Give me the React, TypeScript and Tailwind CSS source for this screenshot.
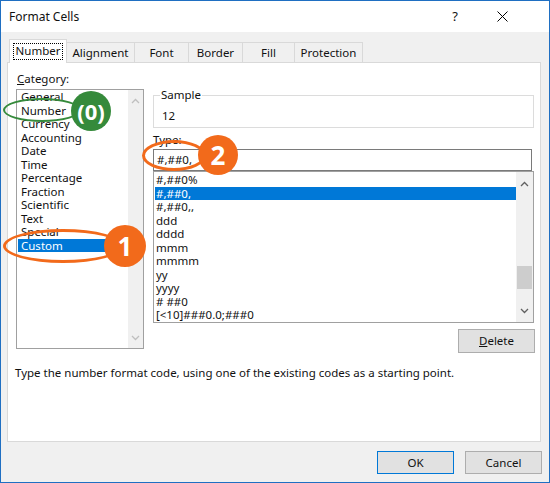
import React from 'react'

const categories = ['General', 'Number', 'Currency', 'Accounting', 'Date', 'Time', 'Percentage', 'Fraction', 'Scientific', 'Text', 'Special', 'Custom']
const types = ['#,##0%', '#,##0,', '#,##0,,', 'ddd', 'dddd', 'mmm', 'mmmm', 'yy', 'yyyy', '# ##0', '[<10]###0.0;###0']

function Chevron({ up }: { up?: boolean }) {
  return (
    <svg width="9" height="6" viewBox="0 0 9 6">
      <polyline points={up ? '1,5 4.5,1.5 8,5' : '1,1 4.5,4.5 8,1'} fill="none" stroke="currentColor" strokeWidth="1.3" />
    </svg>
  )
}

export default function App() {
  return (
    <div className="relative w-[550px] h-[483px] overflow-hidden border border-[#1f6fc2] bg-[#f0f0f0] flex flex-col text-[11.5px] text-[#111] font-['Noto_Sans',sans-serif]">
      {/* title bar */}
      <div className="h-[31px] shrink-0 bg-white flex items-center pl-[8px] text-[12px]">
        <span>Format Cells</span>
        <span className="ml-auto text-[13px]">?</span>
        <svg className="ml-[39px] mr-[41px]" width="11" height="11" viewBox="0 0 11 11">
          <path d="M0.5 0.5 L10.5 10.5 M10.5 0.5 L0.5 10.5" stroke="#000" strokeWidth="1" />
        </svg>
      </div>

      {/* tabs */}
      <div className="relative z-10 flex items-end shrink-0 pl-[8px] pt-[7px] leading-[14px]">
        <div className="relative z-10 -mb-px w-[58px] h-[24px] bg-white border border-b-0 border-[#d9d9d9] flex items-center justify-center">
          <span className="outline-1 outline-dotted outline-black outline-offset-0 px-[2px] pb-[1px]">Number</span>
        </div>
        <div className="w-[68px] h-[20px] border-t border-r border-[#d9d9d9] flex items-center justify-center">Alignment</div>
        <div className="w-[54px] h-[20px] border-t border-r border-[#d9d9d9] flex items-center justify-center">Font</div>
        <div className="w-[54px] h-[20px] border-t border-r border-[#d9d9d9] flex items-center justify-center">Border</div>
        <div className="w-[52px] h-[20px] border-t border-r border-[#d9d9d9] flex items-center justify-center">Fill</div>
        <div className="w-[68px] h-[20px] border-t border-r border-[#d9d9d9] flex items-center justify-center">Protection</div>
      </div>

      {/* panel */}
      <div className="ml-[6px] w-[534px] h-[380px] shrink-0 border border-[#d9d9d9] bg-white flex flex-col">
        <div className="flex pl-[8px] pt-[8px]">
          {/* category */}
          <div className="w-[128px] flex flex-col">
            <div className="leading-[16px] pl-[1px]"><u>C</u>ategory:</div>
            <div className="mt-[2px] h-[260px] border border-[#a0a0a0] flex">
              <div className="flex-1 pl-[1px]">
                {categories.map(c => (
                  <div
                    key={c}
                    className={c === 'Custom' ? 'h-[13.5px] leading-[13.5px] pl-[3px] bg-[#0078d7] text-white' : 'h-[13.5px] leading-[13.5px] pl-[3px]'}
                  >
                    {c}
                  </div>
                ))}
              </div>
              <div className="w-[15px] bg-[#f0f0f0] flex flex-col items-center justify-between pt-[8px] pb-[7px] text-[#bfbfbf]">
                <Chevron up />
                <Chevron />
              </div>
            </div>
          </div>

          {/* right column */}
          <div className="ml-[9px] w-[381px] flex flex-col leading-[14px]">
            <div className="mt-[24px] h-[33px] border border-[#dcdcdc] px-[6px]">
              <div className="-mt-[8px] w-fit bg-white px-[1px]">Sample</div>
              <div className="mt-[7px] pl-[2px]">12</div>
            </div>
            <div className="mt-[5px]">Type:</div>
            <div className="mt-[2px] mr-[2px] h-[22px] border border-[#7a7a7a] pl-[3px] flex items-center">#,##0,</div>
            <div className="h-[152px] border border-[#a0a0a0] flex">
              <div className="flex-1 pt-[1px] pl-[1px]">
                {types.map(t => (
                  <div
                    key={t}
                    className={t === '#,##0,' ? 'h-[13.5px] leading-[13.5px] pl-[1px] bg-[#0078d7] text-white' : 'h-[13.5px] leading-[13.5px] pl-[1px]'}
                  >
                    {t}
                  </div>
                ))}
              </div>
              <div className="w-[17px] bg-[#f0f0f0] flex flex-col items-center pt-[9px] pb-[8px] text-[#606060]">
                <Chevron up />
                <div className="mt-[79px] w-[15px] h-[23px] bg-[#cdcdcd]" />
                <div className="mt-auto"><Chevron /></div>
              </div>
            </div>
            <div className="mt-[6px] self-end mr-[-1px] w-[77px] h-[24px] bg-[#e1e1e1] border border-[#adadad] flex items-center justify-center">
              <span><u>D</u>elete</span>
            </div>
          </div>
        </div>
        <div className="mt-[13px] pl-[7px] leading-[14px]">
          Type the number format code, using one of the existing codes as a starting point.
        </div>
      </div>

      {/* buttons */}
      <div className="mt-[9px] flex justify-end gap-[11px] pr-[7px]">
        <div className="w-[77px] h-[23px] bg-[#e1e1e1] border border-[#0078d7] flex items-center justify-center">OK</div>
        <div className="w-[77px] h-[23px] bg-[#e1e1e1] border border-[#adadad] flex items-center justify-center">Cancel</div>
      </div>

      {/* annotations */}
      <div className="absolute left-[2px] top-[97px] w-[78px] h-[24px] rounded-[50%] border-[2.5px] border-[#358a3b]" />
      <div className="absolute left-[70px] top-[90px] w-[40px] h-[40px] rounded-full bg-[#358a3b] text-white font-bold text-[22px] flex items-center justify-center">(0)</div>

      <div className="absolute left-[2px] top-[228px] w-[120px] h-[34px] rounded-[50%] border-[3px] border-[#f26a1b]" />
      <div className="absolute left-[103px] top-[224px] w-[42px] h-[42px] rounded-full bg-[#f26a1b] text-white font-bold text-[26px] flex items-center justify-center">1</div>

      <div className="absolute left-[141px] top-[139px] w-[64px] h-[31px] rounded-[50%] border-[3px] border-[#f26a1b]" />
      <div className="absolute left-[197px] top-[134px] w-[40px] h-[40px] rounded-full bg-[#f26a1b] text-white font-bold text-[26px] flex items-center justify-center">2</div>
    </div>
  )
}
